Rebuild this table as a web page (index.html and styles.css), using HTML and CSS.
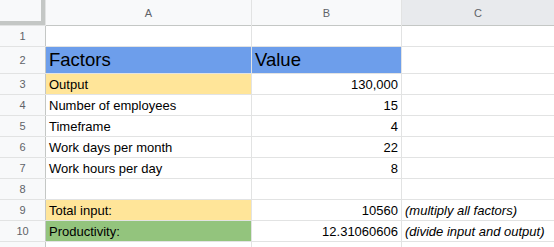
FILE: index.html
```html
<!DOCTYPE html>
<html>
<head>
    <title>Productivity</title>
    <link rel="stylesheet" href="styles.css">
</head>
<body>
    <div class="sheet">
        <div class="corner"></div>
        <div class="ch">A</div>
        <div class="ch">B</div>
        <div class="ch ch-sel">C</div>

        <div class="rh">1</div>
        <div class="cell"></div>
        <div class="cell"></div>
        <div class="cell"></div>

        <div class="rh">2</div>
        <div class="cell big blue">Factors</div>
        <div class="cell big blue">Value</div>
        <div class="cell"></div>

        <div class="rh">3</div>
        <div class="cell yellow">Output</div>
        <div class="cell num">130,000</div>
        <div class="cell"></div>

        <div class="rh">4</div>
        <div class="cell">Number of employees</div>
        <div class="cell num">15</div>
        <div class="cell"></div>

        <div class="rh">5</div>
        <div class="cell">Timeframe</div>
        <div class="cell num">4</div>
        <div class="cell"></div>

        <div class="rh">6</div>
        <div class="cell">Work days per month</div>
        <div class="cell num">22</div>
        <div class="cell"></div>

        <div class="rh">7</div>
        <div class="cell">Work hours per day</div>
        <div class="cell num">8</div>
        <div class="cell"></div>

        <div class="rh">8</div>
        <div class="cell"></div>
        <div class="cell"></div>
        <div class="cell"></div>

        <div class="rh">9</div>
        <div class="cell yellow">Total input:</div>
        <div class="cell num">10560</div>
        <div class="cell note">(multiply all factors)</div>

        <div class="rh">10</div>
        <div class="cell green">Productivity:</div>
        <div class="cell num">12.31060606</div>
        <div class="cell note">(divide input and output)</div>

        <div class="rh"></div>
        <div class="cell"></div>
        <div class="cell"></div>
        <div class="cell"></div>
    </div>
</body>
</html>
```

FILE: styles.css
```css
body {
    margin: 0;
    padding: 0;
    font-family: "Liberation Sans", Arial, sans-serif;
    background-color: #fff;
    color: #000;
    overflow: hidden;
}

/* grid lines come from the gap showing the sheet background */
.sheet {
    display: grid;
    grid-template-columns: 45px 205px 149px 1fr;
    grid-template-rows: 25px 20px 26px repeat(8, 20px) 20px;
    gap: 1px;
    background-color: #e2e3e3;
    width: 554px;
}

.corner {
    background-color: #f8f9fa;
    border-right: 4px solid #c4c7c5;
    border-bottom: 4px solid #c4c7c5;
}

.ch {
    background-color: #f8f9fa;
    color: #5f6368;
    font-size: 11px;
    display: flex;
    align-items: center;
    justify-content: center;
    border-bottom: 1px solid #c4c7c5;
    margin-bottom: -1px;
}

.ch-sel {
    background-color: #e8eaed;
}

.rh {
    background-color: #f8f9fa;
    color: #5f6368;
    font-size: 11px;
    display: flex;
    align-items: center;
    justify-content: center;
    border-right: 1px solid #c4c7c5;
    margin-right: -1px;
}

.cell {
    background-color: #fff;
    font-size: 13px;
    padding: 0 3px 2px 3px;
    display: flex;
    align-items: flex-end;
    white-space: nowrap;
    overflow: hidden;
}

.num {
    justify-content: flex-end;
}

.note {
    font-style: italic;
    overflow: visible;
}

.big {
    font-size: 18.5px;
    padding-bottom: 2px;
}

.blue {
    background-color: #6d9eeb;
}

.yellow {
    background-color: #ffe599;
}

.green {
    background-color: #93c47d;
}
```
